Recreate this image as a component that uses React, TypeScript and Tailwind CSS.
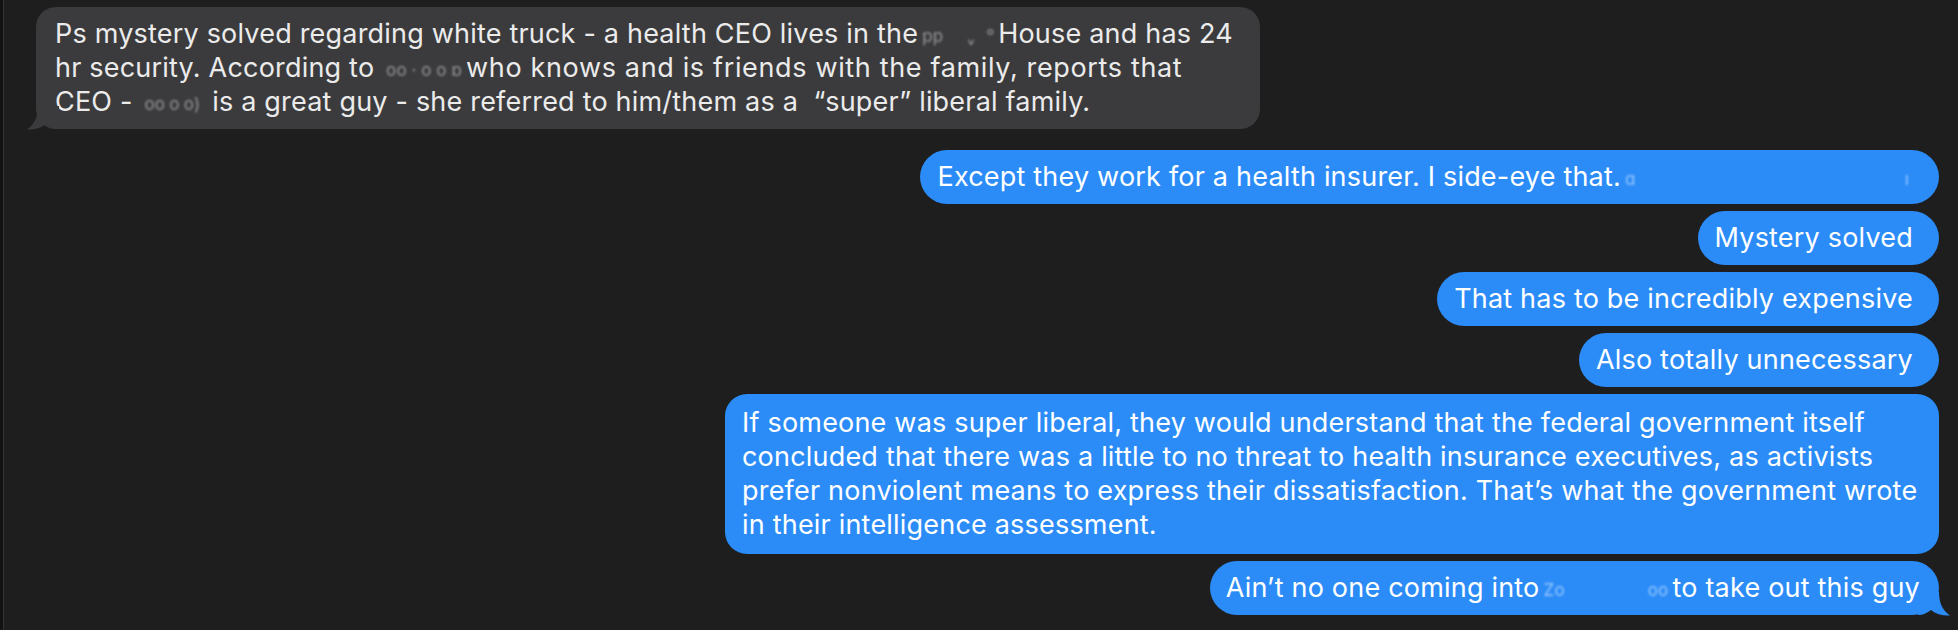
const font = { fontFamily: '"Inter", "Noto Sans", sans-serif' };

function Blur(props: { w: string; marks: string[] }) {
  // redacted bit of the screenshot, drawn as faint blurred marks
  return (
    <span className={`relative inline-block ${props.w} h-[20px] align-[-3px]`}>
      <span className="absolute inset-0 flex items-center justify-between px-[4px] text-[17px] leading-none whitespace-nowrap blur-[1.2px] opacity-50">
        {props.marks.map((m, i) => (
          <span key={i}>{m}</span>
        ))}
      </span>
    </span>
  );
}

function Blue(props: { children: any; last?: boolean }) {
  return (
    <div
      className={`relative bg-[#2b8cf8] text-white rounded-[27px] py-[10px] whitespace-nowrap ${
        props.last ? "pl-[16px] pr-[19px]" : "pl-[17px] pr-[26px]"
      }`}
    >
      {props.children}
      {props.last && (
        <svg
          className="absolute right-[-11px] bottom-[-1px]"
          width="32"
          height="24"
          viewBox="0 0 32 24"
        >
          <path
            d="M4 0 L21 0 C21 10 24 18 32 23.5 C25 24 18 22 13 18 C9 21 5 23 0 23 L0 0 Z"
            fill="#2b8cf8"
          />
        </svg>
      )}
    </div>
  );
}

export default function App() {
  return (
    <div
      className="min-h-[630px] w-full bg-[#1e1e1e] flex text-[27px] leading-[34px] tracking-[0.2px]"
      style={font}
    >
      <div className="w-[3px] bg-[#121212]" />
      <div className="w-[1px] bg-[#333333]" />
      <div className="flex-1 flex flex-col pt-[7px] pl-[32px] pr-[19px]">
        <div className="relative self-start w-[1224px] bg-[#3b3b3d] text-[#ebebeb] rounded-[20px] pl-[19px] pr-[27px] py-[10px] whitespace-nowrap">
          Ps mystery solved regarding white truck - a health CEO lives in the
          <Blur w="w-[80px]" marks={["pp", "", "ᵥ", "ᵒ"]} />
          House and has 24
          <br />
          hr security. According to{" "}
          <Blur w="w-[84px]" marks={["oo", "·", "o", "o", "ɒ"]} />
          <span className="tracking-[0.65px]">
            who knows and is friends with the family, reports that
          </span>
          <br />
          CEO - <Blur w="w-[64px]" marks={["oo", "o", "o)"]} /> is a great guy -
          she referred to him/them as a&nbsp; “super” liberal family.
          <svg
            className="absolute left-[-9px] bottom-[-1px]"
            width="32"
            height="24"
            viewBox="0 0 32 24"
          >
            <path
              d="M28 0 L11 0 C11 10 8 18 0 23.5 C7 24 14 22 19 18 C23 21 27 23 32 23 L32 0 Z"
              fill="#3b3b3d"
            />
          </svg>
        </div>

        <div className="flex flex-col items-end gap-[7px] mt-[21px]">
          <Blue>
            Except they work for a health insurer. I side-eye that.
            <Blur w="w-[292px]" marks={["ɑ", "ı"]} />
          </Blue>
          <Blue>Mystery solved</Blue>
          <Blue>That has to be incredibly expensive</Blue>
          <Blue>Also totally unnecessary</Blue>
          <div className="w-[1214px] bg-[#2b8cf8] text-white rounded-[22px] pl-[17px] pr-[26px] py-[12px] whitespace-nowrap">
            If someone was super liberal, they would understand that the federal
            government itself
            <br />
            concluded that there was a little to no threat to health insurance
            executives, as activists
            <br />
            prefer nonviolent means to express their dissatisfaction. That’s what
            the government wrote
            <br />
            in their intelligence assessment.
          </div>
          <Blue last>
            Ain’t no one coming into
            <Blur w="w-[133px]" marks={["Zo", "", "", "oo"]} />
            to take out this guy
          </Blue>
        </div>
      </div>
    </div>
  );
}
